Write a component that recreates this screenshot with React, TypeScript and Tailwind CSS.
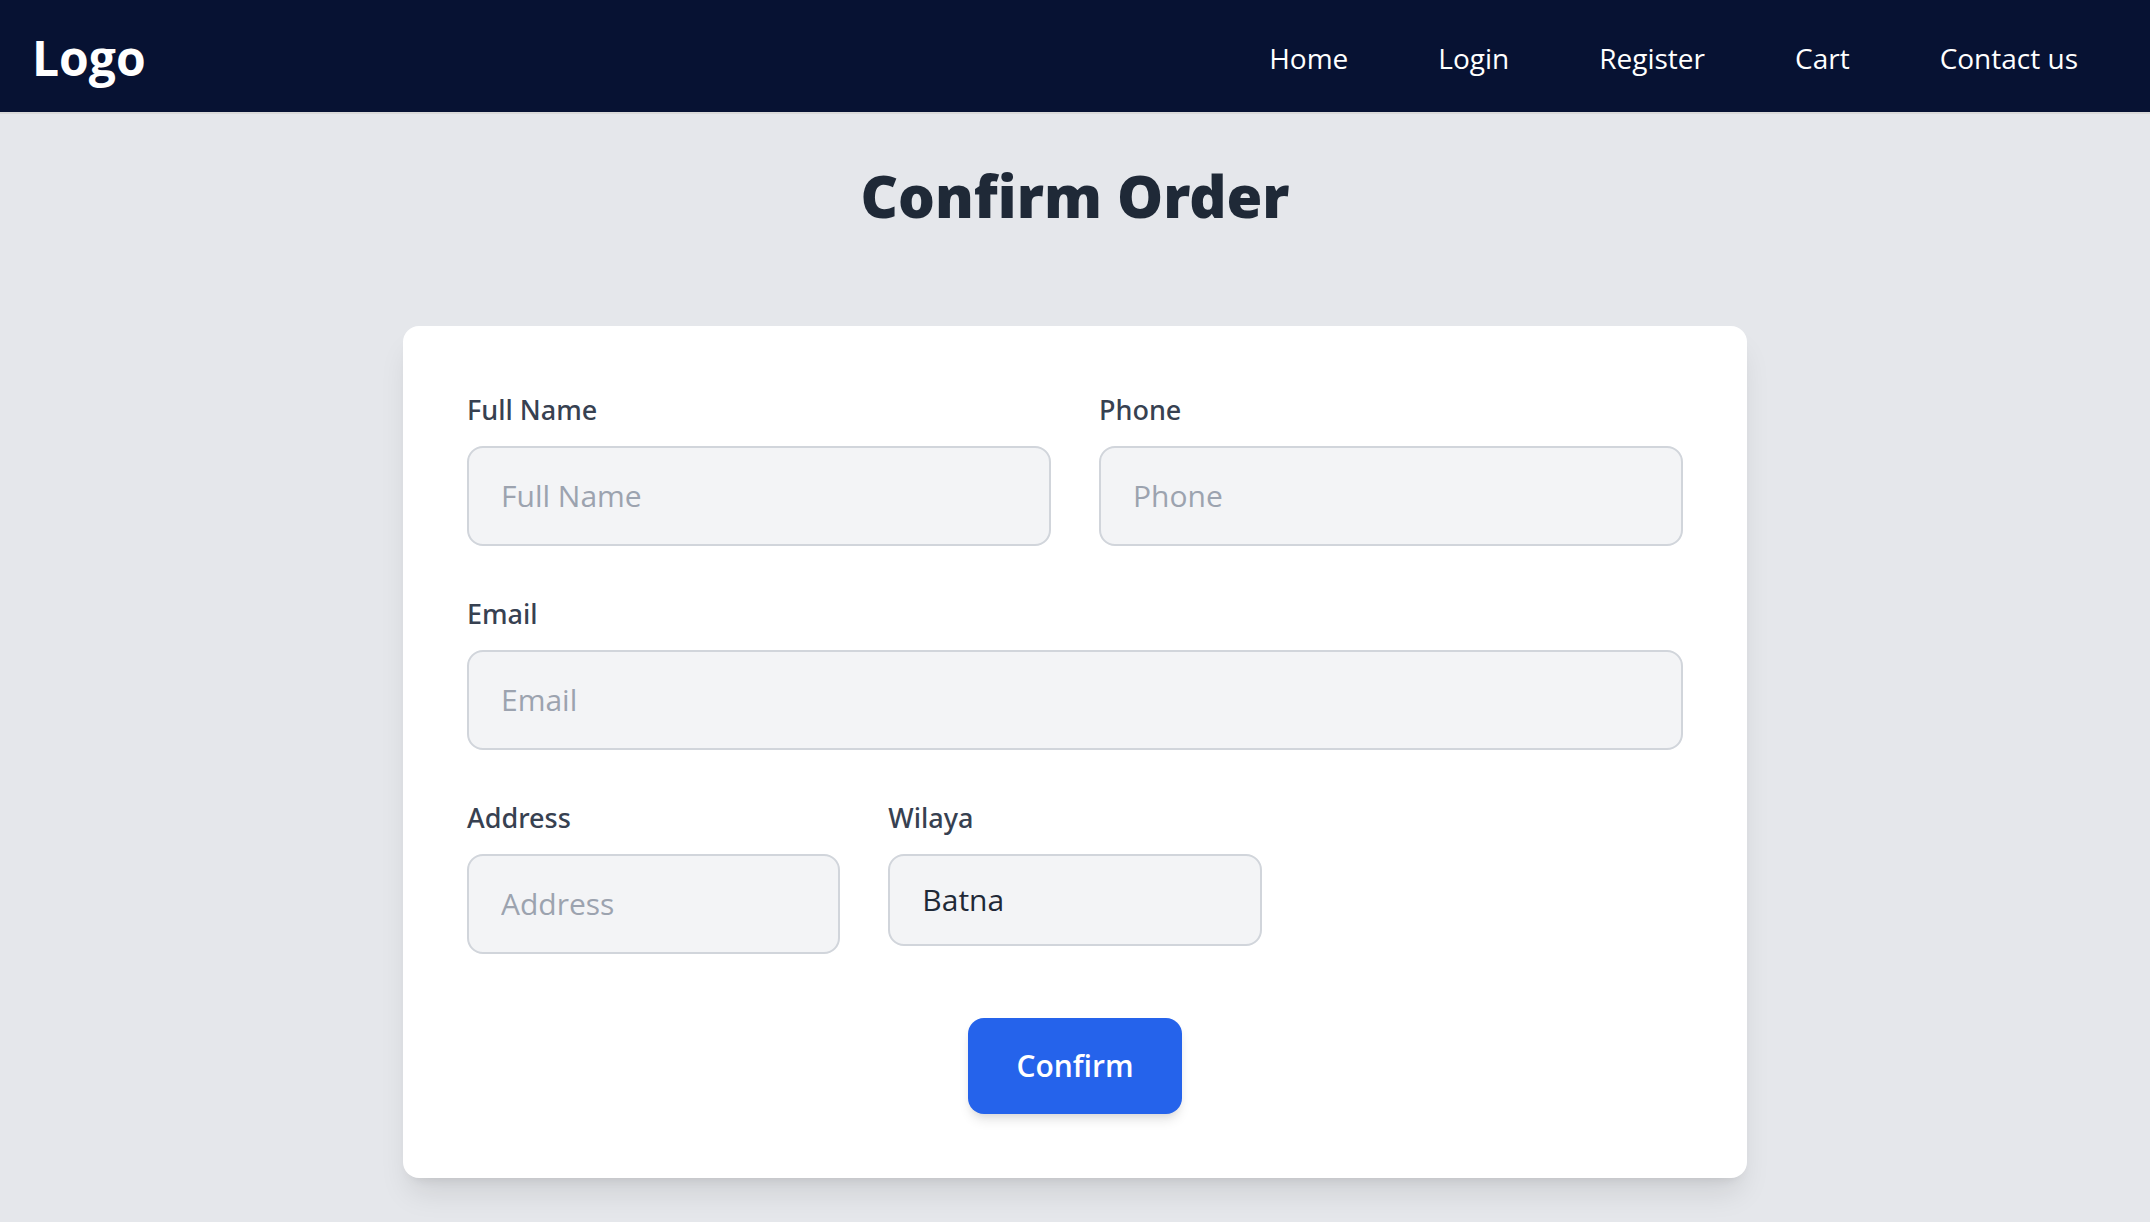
import { useId } from "react";

const links = [
  { label: "Home", href: "#home" },
  { label: "Login", href: "#login" },
  { label: "Register", href: "#register" },
  { label: "Cart", href: "#cart" },
  { label: "Contact us", href: "#contact" },
];

const wilayas = ["Batna", "Alger", "Oran", "Constantine", "Annaba", "Sétif"];

const labelClass =
  "mb-4 block font-['Noto_Sans',sans-serif] text-[27px] leading-10 font-medium text-[#374151]";
const controlClass =
  "block w-full rounded-2xl border-2 border-[#d1d5db] bg-[#f3f4f6] px-8 text-[30px] text-[#1f2937] outline-none focus:border-[#2563eb]";

function Header() {
  return (
    <header className="flex items-center justify-between border-b-2 border-[#d9d9d9] bg-[#071233] pt-[22px] pr-[72px] pb-[18px] pl-8 text-white">
      <a href="#home" className="text-5xl leading-[72px] font-bold">
        Logo
      </a>
      <nav aria-label="Main">
        <ul className="flex gap-[90px] text-[28px] leading-10">
          {links.map((link) => (
            <li key={link.label}>
              <a href={link.href} className="whitespace-nowrap hover:underline">
                {link.label}
              </a>
            </li>
          ))}
        </ul>
      </nav>
    </header>
  );
}

type TextFieldProps = {
  label: string;
  type?: string;
  className?: string;
};

function TextField({ label, type = "text", className }: TextFieldProps) {
  const id = useId();
  return (
    <div className={className}>
      <label htmlFor={id} className={labelClass}>
        {label}
      </label>
      <input
        id={id}
        type={type}
        placeholder={label}
        className={`${controlClass} py-6 leading-12 placeholder:text-[#9ca3af]`}
      />
    </div>
  );
}

function WilayaField() {
  const id = useId();
  return (
    <div>
      <label htmlFor={id} className={labelClass}>
        Wilaya
      </label>
      <select id={id} defaultValue="Batna" className={`${controlClass} appearance-none py-6 leading-10`}>
        {wilayas.map((name) => (
          <option key={name}>{name}</option>
        ))}
      </select>
    </div>
  );
}

export default function App() {
  return (
    <div className="min-h-screen bg-[#e5e7eb] font-['Open_Sans',sans-serif]">
      <Header />
      <main className="px-8 pt-[46px] pb-11">
        <h1 className="mb-[94px] text-center font-['Noto_Sans',sans-serif] text-[58px] leading-[72px] font-black text-[#1f2937]">
          Confirm Order
        </h1>
        <form
          onSubmit={(event) => event.preventDefault()}
          className="mx-auto max-w-[1344px] rounded-2xl bg-white p-16 shadow-[0_20px_30px_-6px_rgba(0,0,0,0.1),0_8px_12px_-8px_rgba(0,0,0,0.1)]"
        >
          <div className="grid grid-cols-2 gap-12">
            <TextField label="Full Name" />
            <TextField label="Phone" type="tel" />
            <TextField label="Email" type="email" className="col-span-2" />
          </div>
          <div className="mt-12 grid grid-cols-3 items-start gap-12">
            <TextField label="Address" />
            <WilayaField />
          </div>
          <div className="mt-16 flex justify-center">
            <button
              type="submit"
              className="rounded-2xl bg-[#2563eb] px-12 py-6 text-[30px] leading-12 font-semibold text-white shadow-[0_8px_12px_-2px_rgba(0,0,0,0.1),0_4px_8px_-4px_rgba(0,0,0,0.1)] hover:bg-[#1d4ed8]"
            >
              Confirm
            </button>
          </div>
        </form>
      </main>
    </div>
  );
}
